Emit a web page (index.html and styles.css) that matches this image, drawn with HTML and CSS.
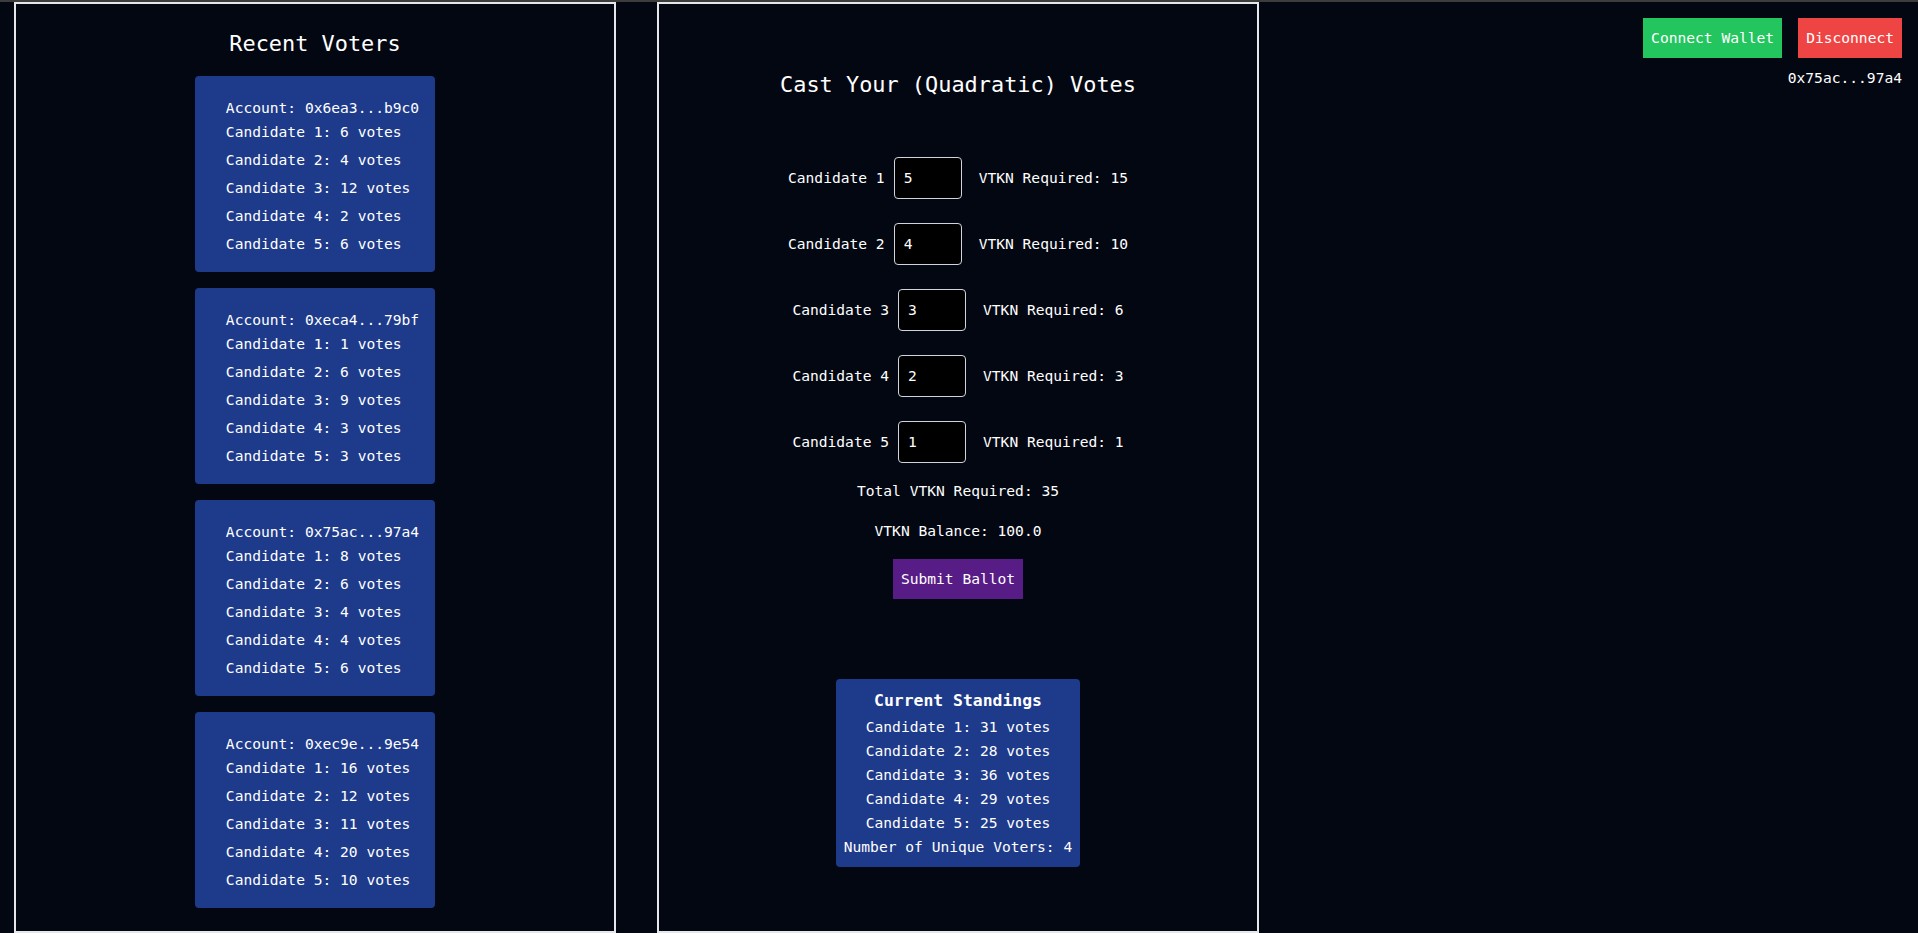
FILE: index.html
```html
<!DOCTYPE html>
<html lang="en">
<head>
<meta charset="utf-8">
<title>Quadratic Voting</title>
<link rel="stylesheet" href="styles.css">
</head>
<body>
<div class="topstrip"></div>
<div class="layout">
  <section class="panel">
    <h2 class="panel-title">Recent Voters</h2>
    <div class="voter-list">
      <div class="voter-card">
        <div class="voter-line">Account: 0x6ea3...b9c0</div>
        <div class="voter-line cand">Candidate 1: 6 votes</div>
        <div class="voter-line cand">Candidate 2: 4 votes</div>
        <div class="voter-line cand">Candidate 3: 12 votes</div>
        <div class="voter-line cand">Candidate 4: 2 votes</div>
        <div class="voter-line cand">Candidate 5: 6 votes</div>
      </div>
      <div class="voter-card">
        <div class="voter-line">Account: 0xeca4...79bf</div>
        <div class="voter-line cand">Candidate 1: 1 votes</div>
        <div class="voter-line cand">Candidate 2: 6 votes</div>
        <div class="voter-line cand">Candidate 3: 9 votes</div>
        <div class="voter-line cand">Candidate 4: 3 votes</div>
        <div class="voter-line cand">Candidate 5: 3 votes</div>
      </div>
      <div class="voter-card">
        <div class="voter-line">Account: 0x75ac...97a4</div>
        <div class="voter-line cand">Candidate 1: 8 votes</div>
        <div class="voter-line cand">Candidate 2: 6 votes</div>
        <div class="voter-line cand">Candidate 3: 4 votes</div>
        <div class="voter-line cand">Candidate 4: 4 votes</div>
        <div class="voter-line cand">Candidate 5: 6 votes</div>
      </div>
      <div class="voter-card">
        <div class="voter-line">Account: 0xec9e...9e54</div>
        <div class="voter-line cand">Candidate 1: 16 votes</div>
        <div class="voter-line cand">Candidate 2: 12 votes</div>
        <div class="voter-line cand">Candidate 3: 11 votes</div>
        <div class="voter-line cand">Candidate 4: 20 votes</div>
        <div class="voter-line cand">Candidate 5: 10 votes</div>
      </div>
    </div>
  </section>

  <section class="panel">
    <h2 class="panel-title vote-title">Cast Your (Quadratic) Votes</h2>
    <div class="vote-row">
      <label class="vote-label">Candidate 1</label>
      <input class="vote-input" type="text" value="5">
      <span class="vote-cost">VTKN Required: 15</span>
    </div>
    <div class="vote-row">
      <label class="vote-label">Candidate 2</label>
      <input class="vote-input" type="text" value="4">
      <span class="vote-cost">VTKN Required: 10</span>
    </div>
    <div class="vote-row">
      <label class="vote-label">Candidate 3</label>
      <input class="vote-input" type="text" value="3">
      <span class="vote-cost">VTKN Required: 6</span>
    </div>
    <div class="vote-row">
      <label class="vote-label">Candidate 4</label>
      <input class="vote-input" type="text" value="2">
      <span class="vote-cost">VTKN Required: 3</span>
    </div>
    <div class="vote-row last-row">
      <label class="vote-label">Candidate 5</label>
      <input class="vote-input" type="text" value="1">
      <span class="vote-cost">VTKN Required: 1</span>
    </div>
    <p class="summary">Total VTKN Required: 35</p>
    <p class="summary">VTKN Balance: 100.0</p>
    <button class="btn btn-submit">Submit Ballot</button>
    <div class="standings">
      <div class="standings-title">Current Standings</div>
      <div>Candidate 1: 31 votes</div>
      <div>Candidate 2: 28 votes</div>
      <div>Candidate 3: 36 votes</div>
      <div>Candidate 4: 29 votes</div>
      <div>Candidate 5: 25 votes</div>
      <div>Number of Unique Voters: 4</div>
    </div>
  </section>

  <aside class="wallet">
    <div class="wallet-buttons">
      <button class="btn btn-connect">Connect Wallet</button>
      <button class="btn btn-disconnect">Disconnect</button>
    </div>
    <div class="wallet-address">0x75ac...97a4</div>
  </aside>
</div>
</body>
</html>
```
FILE: styles.css
```css
* {
  box-sizing: border-box;
}

html, body {
  margin: 0;
  padding: 0;
}

body {
  background: #030712;
  color: #ffffff;
  font-family: "DejaVu Sans Mono", "Liberation Mono", monospace;
  font-size: 14.6px;
  line-height: 24px;
  height: 933px;
  overflow: hidden;
}

.topstrip {
  height: 2px;
  background: #3c3c3c;
}

.layout {
  display: flex;
  height: 931px;
  padding-left: 14px;
  gap: 41px;
}

.panel {
  flex: none;
  width: 602px;
  height: 931px;
  border: 2px solid #e5e7eb;
  display: flex;
  flex-direction: column;
  align-items: center;
  justify-content: center;
}

.panel-title {
  margin: 0 0 16px;
  font-size: 21.9px;
  line-height: 32px;
  font-weight: normal;
}

.vote-title {
  margin-bottom: 56px;
}

.voter-list {
  display: flex;
  flex-direction: column;
  align-items: center;
  gap: 16px;
}

.voter-card {
  background: #1e3a8a;
  border-radius: 4px;
  padding: 20px 16px 16px 31px;
  width: fit-content;
}

.voter-line {
  white-space: nowrap;
}

.cand + .cand {
  margin-top: 4px;
}

.vote-row {
  display: flex;
  align-items: center;
  justify-content: center;
  margin-bottom: 24px;
}

.vote-row.last-row {
  margin-bottom: 16px;
}

.vote-label {
  margin-right: 9px;
}

.vote-input {
  width: 68px;
  height: 42px;
  margin: 0 17px 0 0;
  padding: 0 0 0 9px;
  background: #000000;
  color: #ffffff;
  border: 1px solid #d1d5db;
  border-radius: 4px;
  font-family: inherit;
  font-size: 14.6px;
  line-height: 24px;
  outline: none;
}

.summary {
  margin: 0 0 16px;
}

.btn {
  border: none;
  border-radius: 0;
  color: #ffffff;
  font-family: inherit;
  font-size: 14.6px;
  line-height: 24px;
  height: 40px;
  padding: 0 8px;
  cursor: pointer;
}

.btn-submit {
  background: #581c87;
  margin-bottom: 80px;
}

.standings {
  background: #1e3a8a;
  border-radius: 4px;
  padding: 8px;
  text-align: center;
  white-space: nowrap;
}

.standings-title {
  font-weight: bold;
  font-size: 16.4px;
  line-height: 28px;
}

.wallet {
  flex: 1;
  display: flex;
  flex-direction: column;
  align-items: flex-end;
  padding: 16px 16px 0 0;
}

.wallet-buttons {
  display: flex;
  gap: 16px;
}

.btn-connect {
  background: #22c55e;
}

.btn-disconnect {
  background: #ef4444;
}

.wallet-address {
  margin-top: 8px;
}
```
